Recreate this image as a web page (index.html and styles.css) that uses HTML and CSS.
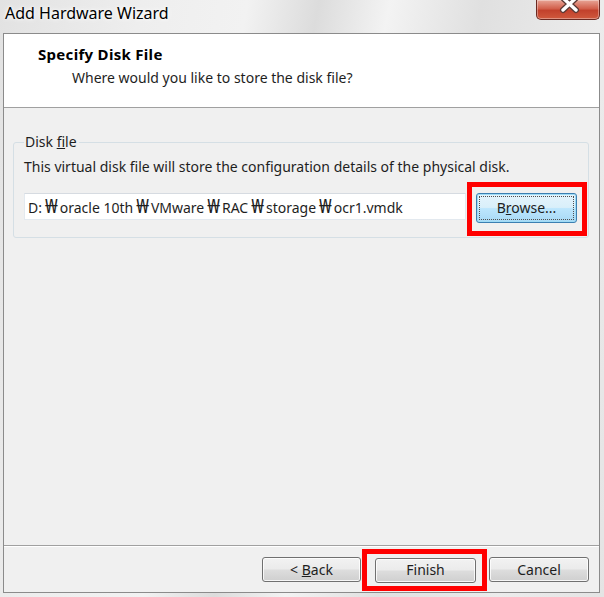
FILE: index.html
```html
<!DOCTYPE html>
<html lang="en">
<head>
  <meta charset="UTF-8">
  <title>Add Hardware Wizard</title>
  <link rel="stylesheet" href="styles.css">
</head>
<body>

  <div class="window">
    <div class="titlebar">
      <span class="title">Add Hardware Wizard</span>
      <button class="close" aria-label="Close">
        <svg width="64" height="20" viewBox="0 0 64 20">
          <path d="M27 -1 L40 11 M40 -1 L27 11" stroke="#5a3a36" stroke-width="6" stroke-linecap="round"/>
          <path d="M27 -1 L40 11 M40 -1 L27 11" stroke="#ffffff" stroke-width="3.4" stroke-linecap="round"/>
        </svg>
      </button>
    </div>

    <div class="client">
      <div class="header">
        <div class="header-title">Specify Disk File</div>
        <div class="header-sub">Where would you like to store the disk file?</div>
      </div>

      <div class="content">
        <fieldset class="group">
          <legend>Disk <u>f</u>ile</legend>
          <p class="desc">This virtual disk file will store the configuration details of the physical disk.</p>
          <div class="file-row">
            <div class="field">D:<span class="won">₩</span>oracle 10th<span class="won">₩</span>VMware<span class="won">₩</span>RAC<span class="won">₩</span>storage<span class="won">₩</span>ocr1.vmdk</div>
            <div class="mark mark-browse">
              <button class="btn btn-default"><span class="focus">B<u>r</u>owse...</span></button>
            </div>
          </div>
        </fieldset>
      </div>

      <div class="footer">
        <button class="btn btn-back">&lt; <u>B</u>ack</button>
        <div class="mark mark-finish">
          <button class="btn btn-finish">Finish</button>
        </div>
        <button class="btn btn-cancel">Cancel</button>
      </div>
    </div>
  </div>

</body>
</html>
```

FILE: styles.css
```css
body {
  margin: 0;
  font-family: "Noto Sans", "Open Sans", "Noto Sans CJK KR", sans-serif;
  color: #1e1e1e;
}
.window {
  width: 604px;
  height: 597px;
  display: flex;
  flex-direction: column;
  background: linear-gradient(100deg, #e2e2e2 0%, #eeeeee 20%, #f2f2f2 35%, #dcdcdc 45%, #f3f3f3 55%, #e0e0e0 68%, #ececec 85%, #e4e4e4 100%);
}
.titlebar {
  height: 33px;
  display: flex;
  justify-content: space-between;
  align-items: flex-start;
}
.title {
  font-size: 16px;
  line-height: 20px;
  padding: 3px 0 0 5px;
  color: #000;
  text-shadow: 0 0 6px #fff, 0 0 3px #fff;
}
.close {
  width: 64px;
  height: 20px;
  margin-right: 4px;
  padding: 0;
  border: 1px solid #6b2a22;
  border-top: none;
  border-radius: 0 0 5px 5px;
  background: linear-gradient(#e8a596 0%, #d2604c 45%, #c2412c 55%, #d0593d 100%);
  box-shadow: inset 0 0 0 1px rgba(255,255,255,0.35);
  overflow: hidden;
}
.close svg {
  display: block;
  margin: -1px 0 0 -1px;
}
.client {
  flex: 1;
  margin: 0 4px 4px 3px;
  border: 1px solid #8b8b8b;
  background: #f0f0f0;
  display: flex;
  flex-direction: column;
}
.header {
  height: 74px;
  box-sizing: border-box;
  background: #fff;
  border-bottom: 1px solid #a0a0a0;
  padding: 12px 0 0 34px;
}
.header-title {
  font-size: 15px;
  font-weight: bold;
  line-height: 16px;
  letter-spacing: 0.3px;
  color: #000;
}
.header-sub {
  font-size: 14px;
  line-height: 18px;
  margin: 7px 0 0 34px;
}
.content {
  flex: 1;
  padding: 26px 10px 0 9px;
}
.group {
  margin: 0;
  padding: 9px 0 1px 10px;
  border: 1px solid #d5dfe5;
  border-radius: 3px;
}
.group legend {
  font-size: 14px;
  line-height: 16px;
  padding: 0 2px 0 1px;
}
.desc {
  margin: 0;
  font-size: 14px;
  line-height: 16px;
}
.file-row {
  display: flex;
  align-items: flex-start;
  gap: 1px;
  margin-top: 7px;
}
.field {
  width: 442px;
  height: 27px;
  box-sizing: border-box;
  margin-top: 11px;
  padding: 5px 0 0 3px;
  background: #fff;
  border: 1px solid #e3e9ef;
  border-top-color: #d6dbe1;
  font-size: 14px;
  line-height: 16px;
  white-space: nowrap;
}
.won {
  margin: 0 2px 0 3px;
  font-size: 19px;
  line-height: 14px;
}
.mark {
  border: 5px solid #ff0000;
}
.mark-browse {
  padding: 6px 5px 8px 4px;
}
.mark-finish {
  padding: 4px 6px 3px 8px;
  margin: 0 2px 0 1px;
}
.btn {
  font-family: inherit;
  font-size: 14px;
  line-height: 16px;
  color: #1e1e1e;
  padding: 0;
  height: 25px;
  border: 1px solid #707070;
  border-radius: 3px;
  background: linear-gradient(#f2f2f2 0%, #ebebeb 48%, #dddddd 52%, #cfcfcf 100%);
  box-shadow: inset 0 0 0 1px rgba(255,255,255,0.8);
}
.btn-default {
  width: 101px;
  height: 30px;
  padding: 2px;
  border-color: #3c7fb1;
  background: linear-gradient(#e5f4fc 0%, #d9effa 48%, #bde6fd 52%, #a7d9f5 100%);
  box-shadow: inset 0 0 0 1px #9fdbf5;
}
.btn-default .focus {
  display: block;
  height: 24px;
  line-height: 22px;
  border: 1px dotted #505050;
  box-sizing: border-box;
}
.footer {
  height: 47px;
  border-top: 1px solid #a0a0a0;
  box-shadow: inset 0 1px 0 #fff;
  display: flex;
  align-items: center;
  justify-content: flex-end;
  padding: 1px 10px 0 0;
  box-sizing: border-box;
}
.btn-back {
  width: 99px;
}
.btn-finish {
  width: 101px;
}
.btn-cancel {
  width: 100px;
}
```
